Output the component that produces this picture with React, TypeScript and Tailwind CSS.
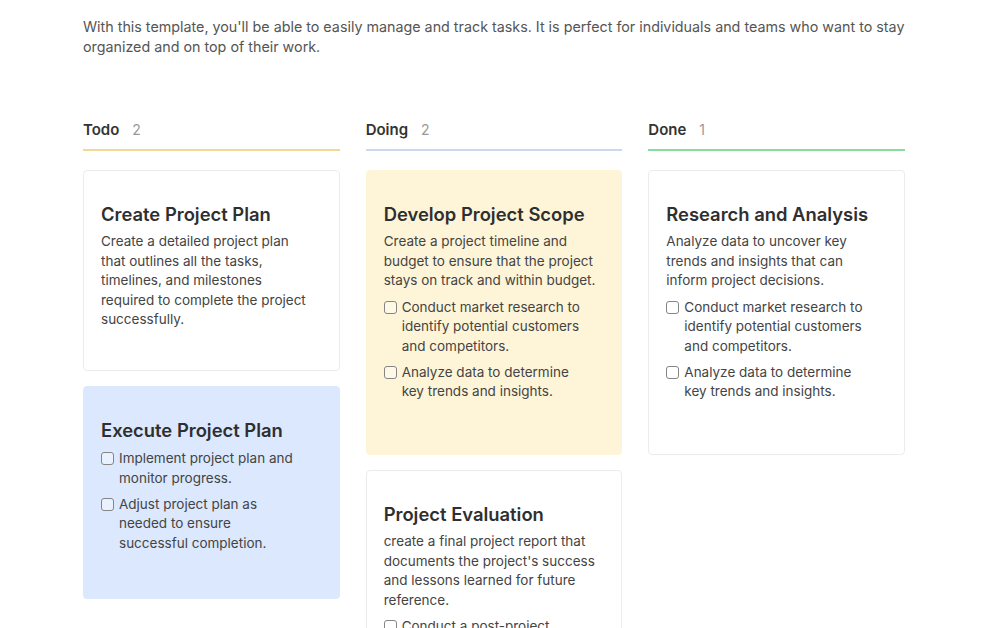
import React from 'react';

type Card = {
  title: string;
  desc?: string;
  tasks?: string[];
  bg: string;
  h: string;
};

type Column = {
  name: string;
  count: number;
  line: string;
  cards: Card[];
};

const columns: Column[] = [
  {
    name: 'Todo',
    count: 2,
    line: 'border-[#efd995]',
    cards: [
      {
        title: 'Create Project Plan',
        desc: 'Create a detailed project plan that outlines all the tasks, timelines, and milestones required to complete the project successfully.',
        bg: 'bg-white border border-[#ececec]',
        h: 'h-[201px]',
      },
      {
        title: 'Execute Project Plan',
        tasks: ['Implement project plan and monitor progress.', 'Adjust project plan as needed to ensure successful completion.'],
        bg: 'bg-[#dbe8fd] border border-[#dbe8fd]',
        h: 'h-[213px]',
      },
    ],
  },
  {
    name: 'Doing',
    count: 2,
    line: 'border-[#cad9ee]',
    cards: [
      {
        title: 'Develop Project Scope',
        desc: 'Create a project timeline and budget to ensure that the project stays on track and within budget.',
        tasks: ['Conduct market research to identify potential customers and competitors.', 'Analyze data to determine key trends and insights.'],
        bg: 'bg-[#fef5d8] border border-[#fef5d8]',
        h: 'h-[285px]',
      },
      {
        title: 'Project Evaluation',
        desc: "create a final project report that documents the project's success and lessons learned for future reference.",
        tasks: ['Conduct a post-project review to identify areas for improvement.'],
        bg: 'bg-white border border-[#ececec]',
        h: 'h-[240px]',
      },
    ],
  },
  {
    name: 'Done',
    count: 1,
    line: 'border-[#8bdb9f]',
    cards: [
      {
        title: 'Research and Analysis',
        desc: 'Analyze data to uncover key trends and insights that can inform project decisions.',
        tasks: ['Conduct market research to identify potential customers and competitors.', 'Analyze data to determine key trends and insights.'],
        bg: 'bg-white border border-[#ececec]',
        h: 'h-[285px]',
      },
    ],
  },
];

function TaskCard({ card }: { card: Card }) {
  return (
    <div className={`${card.bg} ${card.h} shrink-0 rounded-[4px] pl-[17px] pr-[24px] pt-[32px]`}>
      <h3 className="text-[18.4px] leading-[22px] font-semibold text-[#2f2f2f]">{card.title}</h3>
      {card.desc && <p className="mt-[7px] text-[13.5px] leading-[19.5px] text-[#444]">{card.desc}</p>}
      {card.tasks && (
        <div className={`${card.desc ? 'mt-[7px]' : 'mt-[8px]'} flex flex-col gap-[6.5px]`}>
          {card.tasks.map((t) => (
            <div key={t} className="flex items-start gap-[5px]">
              <span className="mt-[3px] h-[13px] w-[13px] shrink-0 rounded-[3px] border-[1.5px] border-[#858585] bg-white/40" />
              <span className="max-w-[184px] text-[13.5px] leading-[19.5px] text-[#444]">{t}</span>
            </div>
          ))}
        </div>
      )}
    </div>
  );
}

export default function App() {
  return (
    <div className="h-[628px] w-[1000px] overflow-hidden bg-white pl-[83px] pt-[17px] font-['Inter','Noto_Sans',sans-serif]">
      <p className="w-[840px] text-[14.3px] leading-[20px] text-[#555]">
        With this template, you'll be able to easily manage and track tasks. It is perfect for individuals and teams who want to stay organized and on top of their work.
      </p>
      <div className="mt-[63px] grid w-[822px] grid-cols-3 gap-[26px]">
        {columns.map((col) => (
          <div key={col.name} className="flex flex-col">
            <div className={`flex items-center border-b-2 pb-[9px] ${col.line}`}>
              <span className="text-[15px] leading-[20px] font-semibold text-[#333]">{col.name}</span>
              <span className="ml-[13px] text-[14px] leading-[20px] text-[#999]">{col.count}</span>
            </div>
            <div className="mt-[19px] flex flex-col gap-[15px]">
              {col.cards.map((c) => (
                <TaskCard key={c.title} card={c} />
              ))}
            </div>
          </div>
        ))}
      </div>
    </div>
  );
}
